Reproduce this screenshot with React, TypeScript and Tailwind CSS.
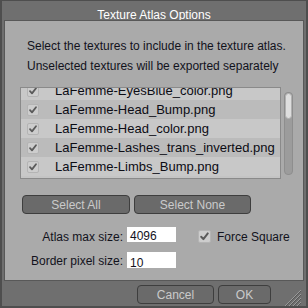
import React from "react";

const font = { fontFamily: '"Liberation Sans", Arial, sans-serif' };

function Check({ size = 12 }: { size?: number }) {
  return (
    <div
      className="flex items-center justify-center rounded-[2px] bg-[#cdcdcd] border border-[#b4b4b4]"
      style={{ width: size, height: size }}
    >
      <svg width={size - 2} height={size - 2} viewBox="0 0 10 10">
        <path d="M2 5.2 L4 7.4 L8 2.2" fill="none" stroke="#5a5a5a" strokeWidth="1.8" strokeLinecap="round" strokeLinejoin="round" />
      </svg>
    </div>
  );
}

const files = [
  "LaFemme-EyesBlue_color.png",
  "LaFemme-Head_Bump.png",
  "LaFemme-Head_color.png",
  "LaFemme-Lashes_trans_inverted.png",
  "LaFemme-Limbs_Bump.png",
];

export default function App() {
  return (
    <div
      className="w-[308px] h-[308px] bg-[#6f6f6f] border-t border-l-2 border-r-2 border-b-2 border-[#4e4e4e] flex flex-col overflow-hidden"
      style={font}
    >
      <div className="h-[19px] pt-[7px] text-center text-[12px] leading-[14px] text-white">
        Texture Atlas Options
      </div>
      <div className="ml-[2px] w-[300px] h-[261px] bg-[#aaaaaa] border border-[#585858] flex flex-col">
        <div className="pt-[15px] pl-[22px] text-[12px] leading-[20px] text-[#12121c]">
          <div>Select the textures to include in the texture atlas.</div>
          <div>Unselected textures will be exported separately</div>
        </div>
        <div className="mt-[11px] ml-[15px] flex h-[92px]">
          <div className="w-[261px] h-[92px] border border-[#8a8a8a] bg-[#c4c4c4] overflow-hidden">
            <div className="-mt-[7px]">
              {files.map((f, i) => (
                <div
                  key={f}
                  className={
                    "h-[19px] flex items-center pl-[6px] text-[13px] text-[#0c0c14] " +
                    (i % 2 === 0 ? "bg-[#c8c8c8]" : "bg-[#bbbbbb]")
                  }
                >
                  <Check size={12} />
                  <span className="ml-[16px] whitespace-nowrap">{f}</span>
                </div>
              ))}
            </div>
          </div>
          <div className="ml-[3px] mt-[5px] w-[9px] h-[83px] rounded-[4px] bg-[#9c9c9c] border border-[#8e8e8e] flex flex-col">
            <div className="h-[26px] rounded-[4px] bg-[#dedede] border border-[#b0b0b0]" />
          </div>
        </div>
        <div className="mt-[16px] ml-[17px] flex gap-[4px]">
          <div className="w-[108px] h-[19px] rounded-[4px] bg-[#6a6a6a] border border-[#3e3e3e] flex items-center justify-center text-[12px] text-[#cacaca]">
            Select All
          </div>
          <div className="w-[117px] h-[19px] rounded-[4px] bg-[#6a6a6a] border border-[#3e3e3e] flex items-center justify-center text-[12px] text-[#cacaca]">
            Select None
          </div>
        </div>
        <div className="mt-[13px] flex h-[16px] text-[12px] text-[#12121c]">
          <div className="w-[118px] text-right leading-[16px] pt-[2px]">Atlas max size:</div>
          <div className="ml-[4px] w-[49px] h-[15px] bg-white pl-[3px] leading-[16px] pt-[1px]">4096</div>
          <div className="ml-[22px] mt-[3px]">
            <Check size={13} />
          </div>
          <div className="ml-[6px] leading-[16px] pt-[2px]">Force Square</div>
        </div>
        <div className="mt-[9px] flex h-[16px] text-[12px] text-[#12121c]">
          <div className="w-[118px] text-right leading-[16px] pt-[1px]">Border pixel size:</div>
          <div className="ml-[4px] w-[49px] h-[16px] bg-white pl-[3px] leading-[16px] pt-[3px]">10</div>
        </div>
      </div>
      <div className="flex h-[25px]">
        <div className="ml-[135px] mt-[4px] flex gap-[4px]">
          <div className="w-[77px] h-[19px] rounded-[4px] bg-[#6a6a6a] border border-[#3e3e3e] flex items-center justify-center text-[12px] text-[#cacaca]">
            Cancel
          </div>
          <div className="w-[53px] h-[19px] rounded-[4px] bg-[#6a6a6a] border border-[#3e3e3e] flex items-center justify-center text-[12px] text-[#cacaca]">
            OK
          </div>
        </div>
        <div className="ml-[14px] mt-[9px]">
          <svg width="16" height="16" viewBox="0 0 16 16">
            {[0, 4, 8, 12].map((o) => (
              <g key={o}>
                <line x1={o} y1={16} x2={16} y2={o} stroke="#9a9a9a" strokeWidth="1" />
                <line x1={o + 1} y1={16} x2={16} y2={o + 1} stroke="#555" strokeWidth="1" />
              </g>
            ))}
          </svg>
        </div>
      </div>
    </div>
  );
}
